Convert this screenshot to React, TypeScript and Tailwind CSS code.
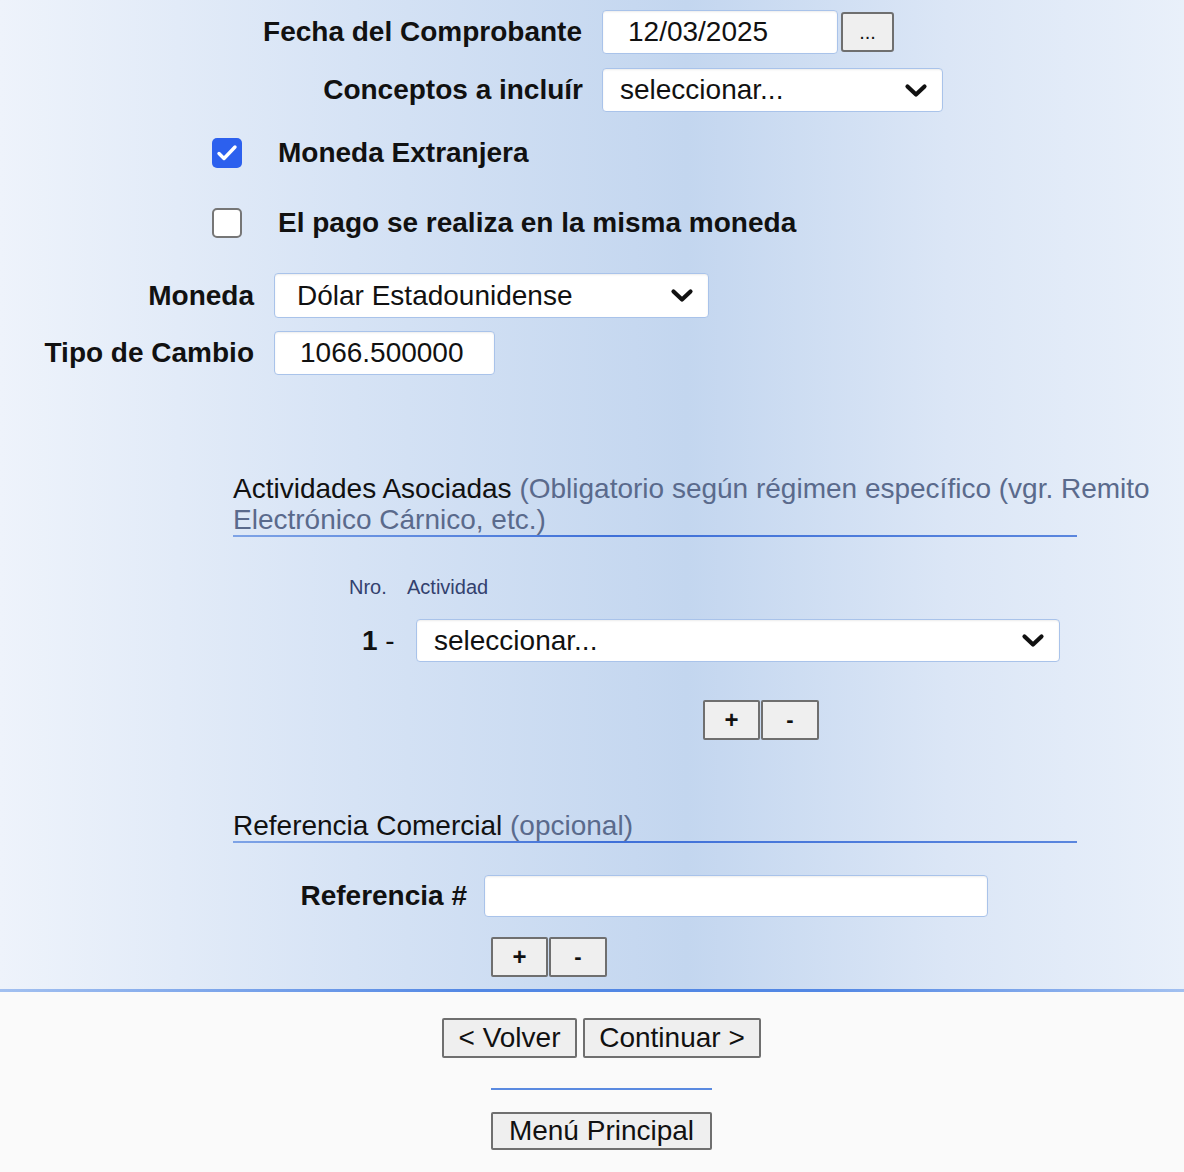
import React from 'react';

const font = "font-['Liberation_Sans',Arial,sans-serif]";

const Chevron: React.FC = () => (
  <svg width="24" height="15" viewBox="0 0 24 15" className="shrink-0">
    <polyline points="3.5,3.5 12,11.5 20.5,3.5" fill="none" stroke="#111" strokeWidth="4.2" strokeLinecap="round" strokeLinejoin="round" />
  </svg>
);

const FakeSelect: React.FC<{ value: string; className: string; padLeft?: string }> = ({ value, className, padLeft = 'pl-[17px]' }) => (
  <div className={`flex items-center justify-between bg-white border-[1.5px] border-[#a9c3ea] rounded-[4px] shadow-[inset_0_1px_2px_rgba(0,0,0,0.08)] pr-[14px] ${padLeft} ${className}`}>
    <span className="text-[28px] text-[#111] leading-none">{value}</span>
    <Chevron />
  </div>
);

const TextBox: React.FC<{ value?: string; className: string }> = ({ value = '', className }) => (
  <input
    readOnly
    value={value}
    className={`bg-white border-[1.5px] border-[#a9c3ea] rounded-[4px] shadow-[inset_0_1px_2px_rgba(0,0,0,0.08)] text-[28px] text-[#111] outline-none ${font} ${className}`}
  />
);

const GrayButton: React.FC<{ label: string; className: string; bold?: boolean }> = ({ label, className, bold }) => (
  <button
    className={`bg-[#efefef] border-2 border-[#6f6f6f] rounded-[2px] text-[#111] flex items-center justify-center leading-none ${bold ? 'font-bold' : ''} ${className}`}
  >
    {label}
  </button>
);

const PlusMinus: React.FC<{ className: string }> = ({ className }) => (
  <div className={`flex gap-[1px] ${className}`}>
    <GrayButton label="+" bold className="w-[57px] h-[40px] text-[24px]" />
    <GrayButton label="-" bold className="w-[58px] h-[40px] text-[22px]" />
  </div>
);

const SectionTitle: React.FC<{ title: string; note: string; className: string }> = ({ title, note, className }) => (
  <div className={`ml-[233px] w-[844px] ${className}`}>
    <div className="w-[935px] text-[28px] leading-[31px]">
      <span className="text-[#111]">{title}</span> <span className="text-[#5a6a8c]">{note}</span>
    </div>
    <div className="h-[2px] bg-[linear-gradient(90deg,#7ea3e6,#3f70d8_45%,#5a86de)]" />
  </div>
);

const label = 'font-bold text-[28px] text-[#111]';

export default function App() {
  return (
    <div className={`${font} w-[1184px] h-[1172px] bg-[#fafafa] overflow-hidden`}>
      {/* Form area */}
      <div className="bg-[linear-gradient(90deg,#eef3fb_0%,#d6e3f5_30%,#c3d6ef_58%,#dbe6f6_80%,#e9f0fa_100%)] pt-[10px] pb-[12px]">
        {/* Fecha */}
        <div className="flex items-center h-[44px]">
          <div className={`w-[582px] text-right ${label}`}>Fecha del Comprobante</div>
          <TextBox value="12/03/2025" className="ml-[20px] w-[236px] h-[44px] pl-[25px]" />
          <GrayButton label="..." className="ml-[3px] w-[53px] h-[40px] text-[20px] rounded-[3px]" />
        </div>

        {/* Conceptos */}
        <div className="flex items-center h-[44px] mt-[14px]">
          <div className={`w-[583px] text-right ${label}`}>Conceptos a incluír</div>
          <FakeSelect value="seleccionar..." className="ml-[19px] w-[341px] h-[44px]" />
        </div>

        {/* Moneda Extranjera */}
        <div className="flex items-center h-[30px] mt-[26px]">
          <div className="ml-[212px] w-[30px] h-[30px] rounded-[5px] bg-[#2c60ee] flex items-center justify-center">
            <svg width="22" height="18" viewBox="0 0 22 18">
              <polyline points="3,9.5 8,14.5 19,3" fill="none" stroke="#fff" strokeWidth="3.4" strokeLinecap="round" strokeLinejoin="round" />
            </svg>
          </div>
          <div className={`ml-[36px] ${label}`}>Moneda Extranjera</div>
        </div>

        {/* Mismo pago */}
        <div className="flex items-center h-[30px] mt-[40px]">
          <div className="ml-[212px] w-[30px] h-[30px] rounded-[5px] bg-white border-2 border-[#767676]" />
          <div className={`ml-[36px] ${label}`}>El pago se realiza en la misma moneda</div>
        </div>

        {/* Moneda */}
        <div className="flex items-center h-[45px] mt-[35px]">
          <div className={`w-[254px] text-right ${label}`}>Moneda</div>
          <FakeSelect value="Dólar Estadounidense" padLeft="pl-[22px]" className="ml-[20px] w-[435px] h-[45px]" />
        </div>

        {/* Tipo de cambio */}
        <div className="flex items-center h-[44px] mt-[13px]">
          <div className={`w-[254px] text-right ${label}`}>Tipo de Cambio</div>
          <TextBox value="1066.500000" className="ml-[20px] w-[221px] h-[44px] pl-[25px]" />
        </div>

        {/* Actividades */}
        <SectionTitle
          className="mt-[98px]"
          title="Actividades Asociadas"
          note="(Obligatorio según régimen específico (vgr. Remito Electrónico Cárnico, etc.)"
        />

        <div className="flex items-center h-[24px] mt-[38px] ml-[349px] text-[20px] text-[#33416e]">
          <span className="w-[58px]">Nro.</span>
          <span>Actividad</span>
        </div>

        <div className="flex items-center h-[43px] mt-[20px]">
          <div className="ml-[362px] w-[54px] text-[28px] text-[#111]">
            <span className="font-bold">1</span> -
          </div>
          <FakeSelect value="seleccionar..." className="w-[644px] h-[43px]" />
        </div>

        <PlusMinus className="ml-[703px] mt-[38px]" />

        {/* Referencia */}
        <SectionTitle className="mt-[70px]" title="Referencia Comercial" note="(opcional)" />

        <div className="flex items-center h-[42px] mt-[32px]">
          <div className={`w-[467px] text-right ${label}`}>Referencia #</div>
          <TextBox className="ml-[17px] w-[504px] h-[42px]" />
        </div>

        <PlusMinus className="ml-[491px] mt-[20px]" />
      </div>
      <div className="h-[3px] bg-[linear-gradient(90deg,#a2c0f0,#5287e4_40%,#5287e4_70%,#a2c0f0)]" />

      {/* Footer */}
      <div className="flex flex-col items-center pl-[19px]">
        <div className="flex gap-[6px] mt-[26px]">
          <GrayButton label="< Volver" className="w-[135px] h-[40px] text-[28px]" />
          <GrayButton label="Continuar >" className="w-[178px] h-[40px] text-[28px]" />
        </div>
        <div className="w-[221px] h-[2px] bg-[#5a8ae0] mt-[30px]" />
        <GrayButton label="Menú Principal" className="w-[221px] h-[38px] text-[28px] mt-[22px]" />
      </div>
    </div>
  );
}
